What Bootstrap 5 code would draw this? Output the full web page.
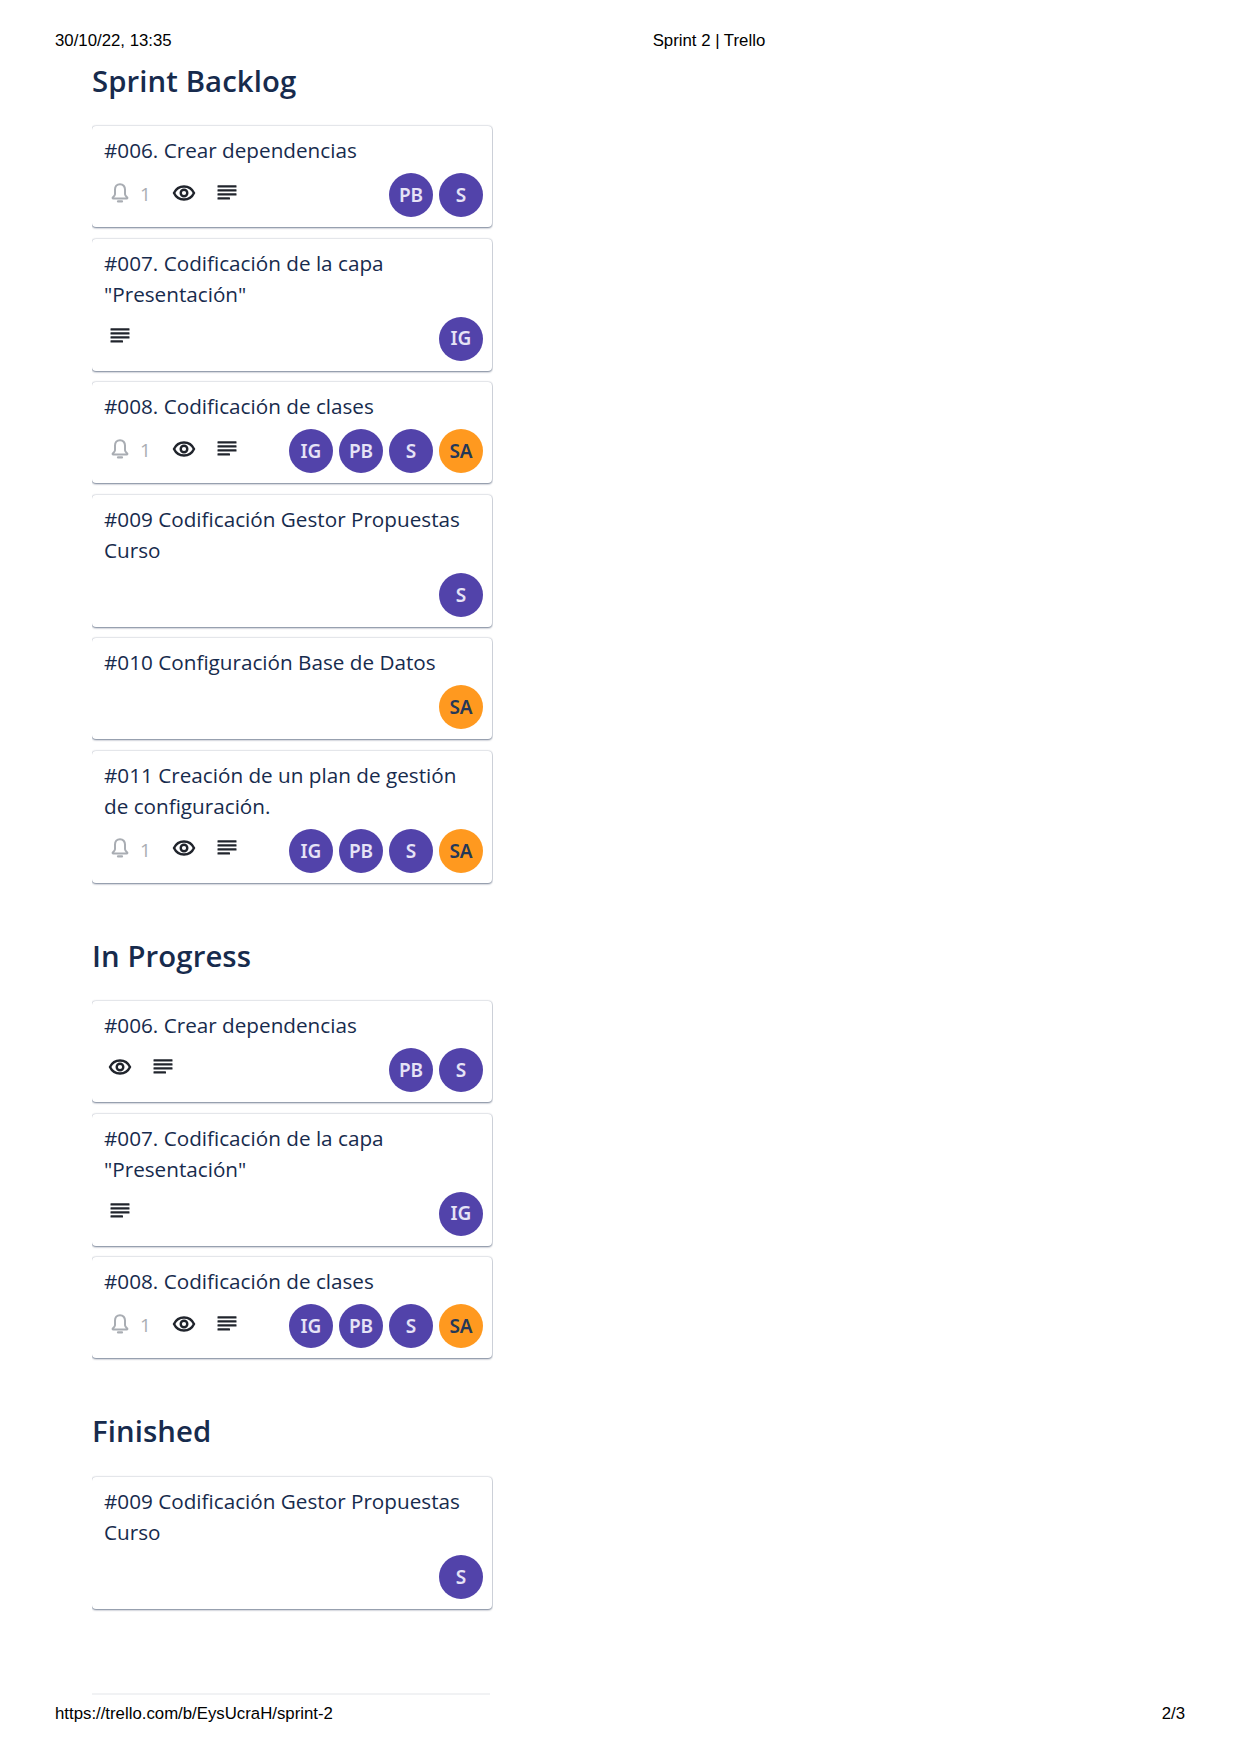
<!DOCTYPE html>
<html lang="es">
<head>
<meta charset="utf-8">
<title>Sprint 2 | Trello</title>
<link href="https://cdn.jsdelivr.net/npm/bootstrap@5.3.0/dist/css/bootstrap.min.css" rel="stylesheet">
<style>
body{width:1240px;height:1754px;background:#fff;color:#172b4d;font-family:"Open Sans","Noto Sans",sans-serif;overflow:hidden}
.print-bar{font-family:"Liberation Sans",Arial,sans-serif;font-size:16.8px;line-height:20px;color:#000;padding:0 55px}
.print-top{padding-top:31px;height:52px}
.print-end{padding-top:1px}
.print-title{margin-left:481px}
.board-col{width:401px;margin-left:92px;height:1642px;overflow:hidden;margin-top:9px;padding:0 1px 0 0}
.list-title{font-size:29.3px;font-weight:600;line-height:40px;color:#172b4d;margin:0 0 25px;letter-spacing:.1px}
.list-gap{margin-bottom:53px}
.list-last{margin-bottom:26px}
.task{border:0;border-radius:4px;box-shadow:0 1px 2px rgba(9,30,66,.5),0 0 2px rgba(9,30,66,.3);padding:9px 9px 10px 12px;margin-bottom:11.6px;color:#172b4d}
.task-name{font-size:20.7px;line-height:31px;padding-right:15px}
.task-meta{margin-top:7px}
.meta-icons{padding-left:4px;gap:19px;height:39px;color:#20242c}
.meta-alert{width:45px;color:#a9adb3;font-size:19px}
.meta-alert span{margin-left:8px;padding-top:3px}
.avatars{gap:6px;margin-left:auto}
.who{width:44px;height:44px;border-radius:50%;background:#5243aa;color:#e6e3f6;font-weight:600;font-size:19px;font-family:"Noto Sans",sans-serif}
.who-o{background:#ff991f;color:#253858}
.foot-rule{position:absolute;left:92px;top:1693px;width:398px;height:2px;background:#f1f2f4}
</style>
</head>
<body>
<svg width="0" height="0" class="position-absolute">
<symbol id="i-bell" viewBox="0 0 24 24"><path d="M12 3.200c-3.200 0-5 2.400-5 5.400v4.600c0 1.200-.9 2.100-2.200 3.300-.4.400-.2 1 .4 1h13.600c.6 0 .8-.6.4-1-1.300-1.200-2.200-2.100-2.200-3.300V8.600c0-3-1.800-5.400-5-5.400z" fill="none" stroke="currentColor" stroke-width="2"/><path d="M10 20.400h4" stroke="currentColor" stroke-width="2.200" stroke-linecap="round"/></symbol>
<symbol id="i-eye" viewBox="0 0 24 24"><path d="M12 5.500c-5 0-8.600 3.500-10 6.500 1.400 3 5 6.500 10 6.500s8.600-3.500 10-6.500c-1.400-3-5-6.500-10-6.500z" fill="none" stroke="currentColor" stroke-width="2.400"/><circle cx="12" cy="12" r="3.300" fill="none" stroke="currentColor" stroke-width="2.400"/></symbol>
<symbol id="i-desc" viewBox="0 0 24 24"><g fill="currentColor"><rect x="2.500" y="4.300" width="19" height="2.300" rx=".4"/><rect x="2.500" y="8.300" width="19" height="2.300" rx=".4"/><rect x="2.500" y="12.300" width="19" height="2.300" rx=".4"/><rect x="2.500" y="16.300" width="12.500" height="2.300" rx=".4"/></g></symbol>
</svg>

<div class="print-bar print-top d-flex"><span>30/10/22, 13:35</span><span class="print-title">Sprint 2 | Trello</span></div>

<main class="board-col">
<section class="list-gap">
<h2 class="list-title">Sprint Backlog</h2>

<div class="card task"><div class="task-name">#006. Crear dependencias</div><div class="task-meta d-flex">
<div class="meta-icons d-flex align-items-center"><div class="meta-alert d-flex align-items-center"><svg width="24" height="24"><use href="#i-bell"/></svg><span>1</span></div><svg width="24" height="24"><use href="#i-eye"/></svg><svg width="24" height="24"><use href="#i-desc"/></svg></div>
<div class="avatars d-flex"><div class="who d-flex align-items-center justify-content-center">PB</div><div class="who d-flex align-items-center justify-content-center">S</div></div></div></div>

<div class="card task"><div class="task-name">#007. Codificación de la capa "Presentación"</div><div class="task-meta d-flex">
<div class="meta-icons d-flex align-items-center"><svg width="24" height="24"><use href="#i-desc"/></svg></div>
<div class="avatars d-flex"><div class="who d-flex align-items-center justify-content-center">IG</div></div></div></div>

<div class="card task"><div class="task-name">#008. Codificación de clases</div><div class="task-meta d-flex">
<div class="meta-icons d-flex align-items-center"><div class="meta-alert d-flex align-items-center"><svg width="24" height="24"><use href="#i-bell"/></svg><span>1</span></div><svg width="24" height="24"><use href="#i-eye"/></svg><svg width="24" height="24"><use href="#i-desc"/></svg></div>
<div class="avatars d-flex"><div class="who d-flex align-items-center justify-content-center">IG</div><div class="who d-flex align-items-center justify-content-center">PB</div><div class="who d-flex align-items-center justify-content-center">S</div><div class="who who-o d-flex align-items-center justify-content-center">SA</div></div></div></div>

<div class="card task"><div class="task-name">#009 Codificación Gestor Propuestas Curso</div><div class="task-meta d-flex">
<div class="avatars d-flex"><div class="who d-flex align-items-center justify-content-center">S</div></div></div></div>

<div class="card task"><div class="task-name">#010 Configuración Base de Datos</div><div class="task-meta d-flex">
<div class="avatars d-flex"><div class="who who-o d-flex align-items-center justify-content-center">SA</div></div></div></div>

<div class="card task"><div class="task-name">#011 Creación de un plan de gestión de configuración.</div><div class="task-meta d-flex">
<div class="meta-icons d-flex align-items-center"><div class="meta-alert d-flex align-items-center"><svg width="24" height="24"><use href="#i-bell"/></svg><span>1</span></div><svg width="24" height="24"><use href="#i-eye"/></svg><svg width="24" height="24"><use href="#i-desc"/></svg></div>
<div class="avatars d-flex"><div class="who d-flex align-items-center justify-content-center">IG</div><div class="who d-flex align-items-center justify-content-center">PB</div><div class="who d-flex align-items-center justify-content-center">S</div><div class="who who-o d-flex align-items-center justify-content-center">SA</div></div></div></div>
</section>

<section class="list-gap">
<h2 class="list-title">In Progress</h2>

<div class="card task"><div class="task-name">#006. Crear dependencias</div><div class="task-meta d-flex">
<div class="meta-icons d-flex align-items-center"><svg width="24" height="24"><use href="#i-eye"/></svg><svg width="24" height="24"><use href="#i-desc"/></svg></div>
<div class="avatars d-flex"><div class="who d-flex align-items-center justify-content-center">PB</div><div class="who d-flex align-items-center justify-content-center">S</div></div></div></div>

<div class="card task"><div class="task-name">#007. Codificación de la capa "Presentación"</div><div class="task-meta d-flex">
<div class="meta-icons d-flex align-items-center"><svg width="24" height="24"><use href="#i-desc"/></svg></div>
<div class="avatars d-flex"><div class="who d-flex align-items-center justify-content-center">IG</div></div></div></div>

<div class="card task"><div class="task-name">#008. Codificación de clases</div><div class="task-meta d-flex">
<div class="meta-icons d-flex align-items-center"><div class="meta-alert d-flex align-items-center"><svg width="24" height="24"><use href="#i-bell"/></svg><span>1</span></div><svg width="24" height="24"><use href="#i-eye"/></svg><svg width="24" height="24"><use href="#i-desc"/></svg></div>
<div class="avatars d-flex"><div class="who d-flex align-items-center justify-content-center">IG</div><div class="who d-flex align-items-center justify-content-center">PB</div><div class="who d-flex align-items-center justify-content-center">S</div><div class="who who-o d-flex align-items-center justify-content-center">SA</div></div></div></div>
</section>

<section>
<h2 class="list-title list-last">Finished</h2>
<div class="card task"><div class="task-name">#009 Codificación Gestor Propuestas Curso</div><div class="task-meta d-flex">
<div class="avatars d-flex"><div class="who d-flex align-items-center justify-content-center">S</div></div></div></div>
</section>
</main>

<div class="foot-rule"></div>
<div class="print-bar print-end d-flex justify-content-between"><span>https://trello.com/b/EysUcraH/sprint-2</span><span>2/3</span></div>
<script src="https://cdn.jsdelivr.net/npm/bootstrap@5.3.0/dist/js/bootstrap.bundle.min.js"></script>
</body>
</html>
